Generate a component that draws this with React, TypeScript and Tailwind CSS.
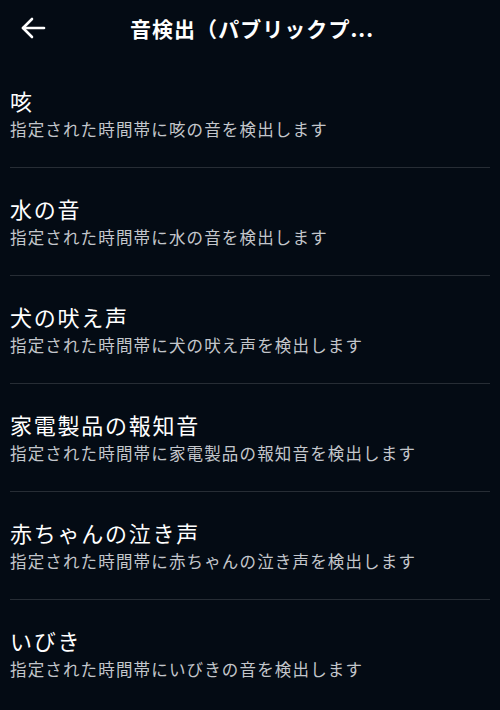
const items = [
  { title: '咳', desc: '指定された時間帯に咳の音を検出します' },
  { title: '水の音', desc: '指定された時間帯に水の音を検出します' },
  { title: '犬の吠え声', desc: '指定された時間帯に犬の吠え声を検出します' },
  { title: '家電製品の報知音', desc: '指定された時間帯に家電製品の報知音を検出します' },
  { title: '赤ちゃんの泣き声', desc: '指定された時間帯に赤ちゃんの泣き声を検出します' },
  { title: 'いびき', desc: '指定された時間帯にいびきの音を検出します' },
];

export default function App() {
  return (
    <div
      className="min-h-[710px] w-[500px] bg-[#040b14] text-white"
      style={{ fontFamily: '"Noto Sans CJK JP", "Noto Sans", sans-serif' }}
    >
      {/* Header */}
      <header className="relative flex h-[60px] items-center justify-center">
        <button className="absolute left-[20px] top-[16px] flex h-[24px] w-[26px] items-center justify-center">
          <svg width="26" height="24" viewBox="0 0 26 24" fill="none" stroke="white" strokeWidth="2.6" strokeLinecap="round" strokeLinejoin="round">
            <path d="M24 12H3" />
            <path d="M12 3L3 12L12 21" />
          </svg>
        </button>
        <h1 className="mb-[4px] ml-[4px] text-[21px] font-bold leading-none tracking-[0.05em]">音検出（パブリックプ...</h1>
      </header>

      {/* List */}
      <ul className="px-[10px]">
        {items.map((item, i) => (
          <li
            key={item.title}
            className={`h-[108px] pt-[25px] ${i < items.length - 1 ? 'border-b border-[#272d35]' : ''}`}
          >
            <div className="text-[22px] leading-[30px] tracking-[0.08em] text-white">{item.title}</div>
            <div className="text-[16.5px] leading-[28px] tracking-[0.07em] text-[#c3c6cb]">{item.desc}</div>
          </li>
        ))}
      </ul>
    </div>
  );
}
